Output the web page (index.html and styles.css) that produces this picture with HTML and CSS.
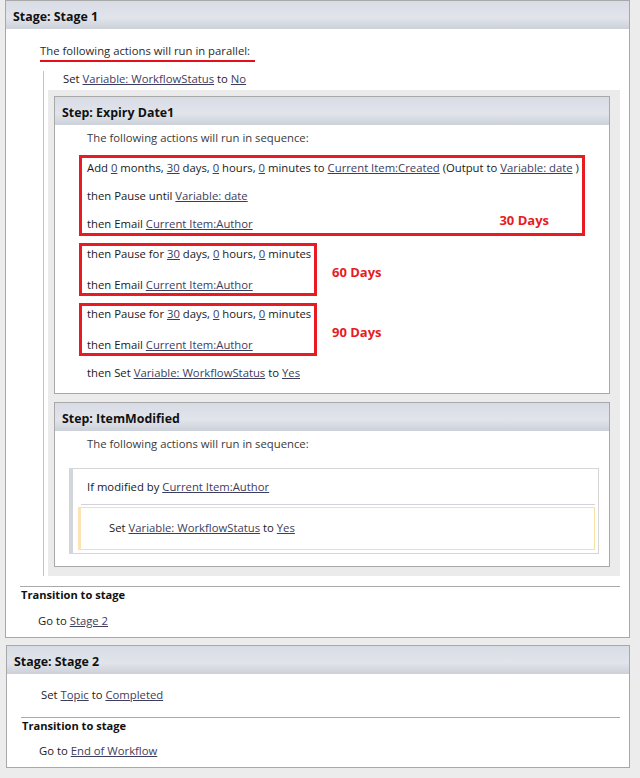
FILE: index.html
```html
<!DOCTYPE html>
<html lang="en">

<head>
  <meta charset="UTF-8">
  <title>Workflow stages</title>
  <link rel="stylesheet" href="styles.css">
</head>

<body>
  <div class="page">

    <!-- stage 1 -->
    <div class="stage">
      <div class="stage-head">Stage: Stage 1</div>
      <div class="stage-body">
        <div class="par-title"><span class="marked">The following actions will run in parallel:</span></div>
        <div class="par">
          <div class="set-line">Set <span class="lnk">Variable: WorkflowStatus</span> to <span class="lnk">No</span></div>
          <div class="branches">

            <div class="step">
              <div class="step-head">Step: Expiry Date1</div>
              <div class="step-body">
                <div class="seq">The following actions will run in sequence:</div>
                <div class="mark mark-wide">
                  <div class="line">Add <span class="lnk">0</span> months, <span class="lnk">30</span> days, <span class="lnk">0</span> hours, <span class="lnk">0</span> minutes to <span class="lnk">Current Item:Created</span> (Output to <span class="lnk">Variable: date</span> )</div>
                  <div class="line">then Pause until <span class="lnk">Variable: date</span></div>
                  <div class="line">then Email <span class="lnk">Current Item:Author</span></div>
                  <span class="note note-30">30 Days</span>
                </div>
                <div class="mark-row">
                  <div class="mark mark-narrow">
                    <div class="line">then Pause for <span class="lnk">30</span> days, <span class="lnk">0</span> hours, <span class="lnk">0</span> minutes</div>
                    <div class="line">then Email <span class="lnk">Current Item:Author</span></div>
                  </div>
                  <span class="note">60 Days</span>
                </div>
                <div class="mark-row">
                  <div class="mark mark-narrow">
                    <div class="line">then Pause for <span class="lnk">30</span> days, <span class="lnk">0</span> hours, <span class="lnk">0</span> minutes</div>
                    <div class="line">then Email <span class="lnk">Current Item:Author</span></div>
                  </div>
                  <span class="note">90 Days</span>
                </div>
                <div class="then-set">then Set <span class="lnk">Variable: WorkflowStatus</span> to <span class="lnk">Yes</span></div>
              </div>
            </div>

            <div class="step">
              <div class="step-head">Step: ItemModified</div>
              <div class="step-body step-body-2">
                <div class="seq">The following actions will run in sequence:</div>
                <div class="cond">
                  <div class="cond-line">If modified by <span class="lnk">Current Item:Author</span></div>
                  <div class="cond-sep"></div>
                  <div class="cond-then">Set <span class="lnk">Variable: WorkflowStatus</span> to <span class="lnk">Yes</span></div>
                </div>
              </div>
            </div>

          </div>
        </div>
        <div class="trans">
          <div class="trans-title">Transition to stage</div>
          <div class="trans-go">Go to <span class="lnk">Stage 2</span></div>
        </div>
      </div>
    </div>

    <!-- stage 2 -->
    <div class="stage stage-2">
      <div class="stage-head">Stage: Stage 2</div>
      <div class="stage-body">
        <div class="set-topic">Set <span class="lnk">Topic</span> to <span class="lnk">Completed</span></div>
        <div class="trans trans-2">
          <div class="trans-title">Transition to stage</div>
          <div class="trans-go trans-go-2">Go to <span class="lnk">End of Workflow</span></div>
        </div>
      </div>
    </div>

  </div>
</body>

</html>
```

FILE: styles.css
```css
* {
  margin: 0;
  padding: 0;
  box-sizing: border-box;
}

body {
  background: #ececec;
  font-family: "Open Sans", "Noto Sans", sans-serif;
  font-size: 11.3px;
  color: #1a1a1a;
  white-space: nowrap;
}

.page {
  padding: 0 10px 9px 5px;
}

.lnk {
  color: #3d3d5e;
  text-decoration: underline;
}

/* stage boxes */
.stage {
  background: #fff;
  border: 1px solid #a8a8a8;
}

.stage-2 {
  margin-top: 7px;
  margin-left: 1px;
}

.stage-head,
.step-head {
  height: 28px;
  line-height: 31px;
  padding-left: 7px;
  font-size: 12.4px;
  font-weight: bold;
  color: #111;
  background: linear-gradient(#d8dce4, #e1e4eb 60%, #ccd0d8);
}

.stage-body {
  padding: 0 9px 8px 0;
}

.par-title {
  margin: 13px 0 0 34px;
}

.marked {
  display: inline-block;
  line-height: 18px;
  padding-right: 5px;
  color: #2a2a2a;
  border-bottom: 2px solid #e3101a;
}

/* parallel block */
.par {
  margin: 1px 0 0 37px;
  border-left: 1px solid #c4c4c4;
  padding-left: 4px;
}

.set-line {
  margin: 9px 0 0 15px;
  line-height: 16px;
}

.branches {
  margin-top: 3px;
  background: #ebebeb;
  padding: 6px 10px 9px 6px;
}

.step {
  background: #fff;
  border: 1px solid #a8a8a8;
}

.step + .step {
  margin-top: 8px;
}

.step-body {
  padding: 0 0 12px 14px;
}

.step-body-2 {
  padding-bottom: 12px;
}

.seq {
  margin: 5px 0 0 18px;
  line-height: 16px;
  color: #3a3a3a;
}

/* red highlight boxes */
.mark {
  position: relative;
  border: 3px solid #e81b23;
  padding: 2px 5px 1px;
  margin: 9px 0 0 10px;
  width: 506px;
}

.line {
  line-height: 16px;
}

.mark .line + .line {
  margin-top: 12px;
}

.mark-narrow .line + .line {
  margin-top: 15px;
}

.mark-row {
  display: flex;
  align-items: center;
  gap: 15px;
  margin-top: 7px;
}

.mark-row .mark {
  margin-top: 0;
  width: 238px;
  padding: 0 5px;
}

.note {
  padding-top: 4px;
  font-size: 13px;
  font-weight: bold;
  color: #e81b23;
}

.note-30 {
  position: absolute;
  right: 33px;
  top: 49px;
}

.then-set {
  margin: 9px 0 0 18px;
  line-height: 16px;
}

/* if block */
.cond {
  margin: 16px 10px 0 0;
  border: 1px solid #d6d6d6;
  border-left: 4px solid #d2d5da;
  padding: 10px 0 3px;
}

.cond-line {
  padding-left: 14px;
  line-height: 16px;
}

.cond-sep {
  margin: 9px 3px 0 8px;
  border-top: 1px solid #d5d0dc;
}

.cond-then {
  margin: 2px 3px 0 5px;
  border: 1px solid #f5e1a4;
  border-left: 3px solid #fde3b3;
  padding: 12px 0 13px 28px;
  line-height: 16px;
}

/* transitions */
.trans {
  margin: 10px 0 0 14px;
  border-top: 1px solid #a9a9a9;
}

.trans-title {
  padding-left: 1px;
  line-height: 16px;
  font-size: 11.1px;
  font-weight: bold;
  color: #111;
}

.trans-go {
  margin: 10px 0 0 18px;
  line-height: 16px;
}

.set-topic {
  margin: 13px 0 0 34px;
  line-height: 16px;
}

.trans-2 {
  margin-top: 14px;
}

.trans-go-2 {
  margin-top: 9px;
}
```
